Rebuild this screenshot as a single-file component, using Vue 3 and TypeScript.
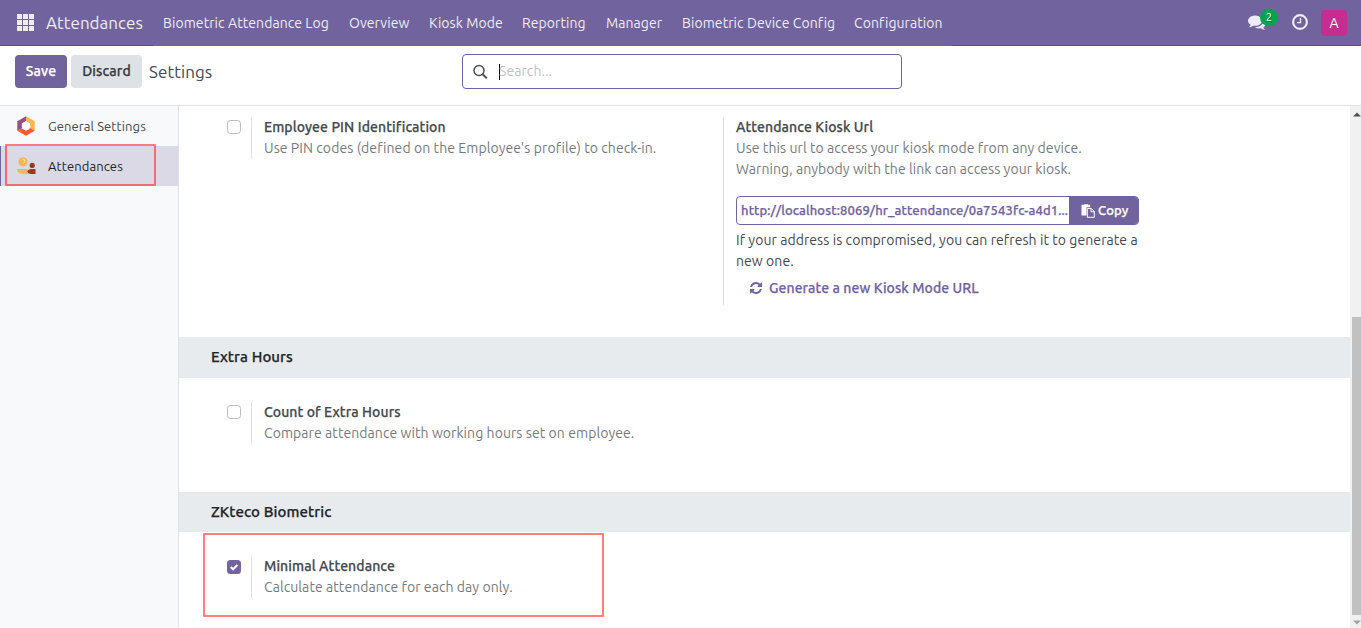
<script setup lang="ts">
import { ref } from 'vue'

interface MenuItem { key: string; label: string }

const menu: MenuItem[] = [
  { key: 'log', label: 'Biometric Attendance Log' },
  { key: 'overview', label: 'Overview' },
  { key: 'kiosk', label: 'Kiosk Mode' },
  { key: 'reporting', label: 'Reporting' },
  { key: 'manager', label: 'Manager' },
  { key: 'device', label: 'Biometric Device Config' },
  { key: 'config', label: 'Configuration' },
]

const minimal = ref(true)
const extra = ref(false)
const pin = ref(false)
const kioskUrl = 'http://localhost:8069/hr_attendance/0a7543fc-a4d1...'
</script>

<template>
  <div class="page">
    <header class="navbar">
      <div class="brand">
        <svg class="apps" viewBox="0 0 17 17" width="17" height="17" fill="#efedf4">
          <path d="M0 0h5v5H0zM6 0h5v5H6zM12 0h5v5h-5zM0 6h5v5H0zM6 6h5v5H6zM12 6h5v5h-5zM0 12h5v5H0zM6 12h5v5H6zM12 12h5v5h-5z" />
        </svg>
        <span class="app-name">Attendances</span>
      </div>
      <nav class="menu">
        <a v-for="m in menu" :key="m.key" :class="['menu-item', m.key]">{{ m.label }}</a>
      </nav>
      <div class="systray">
        <div class="messages">
          <svg viewBox="0 0 1792 1792" width="18" height="18" fill="#efedf4">
            <path d="M1408 768q0 139-94 257t-256.500 186.500-353.500 68.500q-86 0-176-16-124 88-278 128-36 9-86 16h-3q-11 0-20.500-8t-11.500-21q-1-3-1-6.500t.5-6.500 2-6l2.500-5 3.500-5.500 4-5 4.500-5 4-4.500q5-6 23-25t26-29.500 22.500-29 25-38.500 20.500-44q-124-72-195-177t-71-224q0-139 94-257t256.500-186.500 353.500-68.500 353.500 68.500 256.500 186.500 94 257zm384 256q0 120-71 224.500t-195 176.500q10 24 20.500 44t25 38.500 22.500 29 26 29.500 23 25q1 1 4 4.500t4.500 5 4 5 3.500 5.500l2.500 5 2 6 .5 6.500-1 6.500q-3 14-13 22t-22 7q-50-7-86-16-154-40-278-128-90 16-176 16-271 0-472-132 58 4 88 4 161 0 309-45t264-129q125-92 192-212t67-254q0-77-23-152 129 71 204 178t75 230z" />
          </svg>
          <span class="badge">2</span>
        </div>
        <svg class="clock" viewBox="0 0 16 16" width="16" height="16" fill="none" stroke="#efedf4">
          <circle cx="8" cy="8" r="6.900" stroke-width="2.100" />
          <path d="M8.500 4v4.700H5" stroke-width="1.300" />
        </svg>
        <span class="avatar">A</span>
      </div>
    </header>

    <section class="control">
      <button class="btn save">Save</button>
      <button class="btn discard">Discard</button>
      <span class="title">Settings</span>
      <div class="search">
        <svg viewBox="0 0 16 16" width="16" height="16" fill="none" stroke="#495057">
          <circle cx="6" cy="6.500" r="5" stroke-width="1.500" />
          <path d="M9.600 10.200l4.100 4" stroke-width="1.900" />
        </svg>
        <span class="caret"></span>
        <span class="placeholder">Search...</span>
      </div>
    </section>

    <div class="body">
      <aside class="sidebar">
        <div class="tab">
          <svg viewBox="0 0 20 20" width="20" height="20">
            <path d="M10 .3L1.300 5.200v9.600L6 12.300 5.800 7.600 10 5z" fill="#985184" />
            <path d="M10 .3l8.700 4.900v9.600L14.200 12V7.700L10 5z" fill="#fbb54f" />
            <path d="M1.300 14.800L10 19.700l8.700-4.900-4.500-2.700L10 14.800l-4.100-2.600z" fill="#fc5a2d" />
            <circle cx="10" cy="10" r="4.200" fill="#fff" />
          </svg>
          <span class="general">General Settings</span>
        </div>
        <div class="tab active">
          <svg viewBox="0 0 20 20" width="20" height="20">
            <circle cx="7" cy="5.700" r="4.500" fill="#fbb54f" />
            <path d="M6.300 2.800q2.800.2 2.600 3L7.300 7" fill="none" stroke="#fde3bd" stroke-width="1" />
            <circle cx="16.200" cy="9.400" r="2.600" fill="#953b24" />
            <path d="M.7 13h10.500l3.500 5H6.500Q1.600 17.800.7 13z" fill="#fbb54f" />
            <path d="M11.200 15.500q1-2.500 3.500-2.500h4.800v5h-4.800q-2.500-.4-3.500-2.500z" fill="#953b24" />
          </svg>
          <span class="att">Attendances</span>
          <i class="mark"></i>
        </div>
      </aside>

      <main class="content">
        <div class="row first">
          <div class="setting left">
            <span :class="['check', { on: pin }]"></span>
            <div class="pane">
              <div class="name">Employee PIN Identification</div>
              <div class="help">Use PIN codes (defined on the Employee's profile) to check-in.</div>
            </div>
          </div>
          <div class="pane kiosk-pane">
            <div class="name">Attendance Kiosk Url</div>
            <div class="help">Use this url to access your kiosk mode from any device.</div>
            <div class="help">Warning, anybody with the link can access your kiosk.</div>
            <div class="copy-field">
              <span class="url">{{ kioskUrl }}</span>
              <button class="copy">
                <svg viewBox="0 0 14 14" width="14" height="14">
                  <path d="M.5.8h2.600V.3h3.800v.5h2.300v2.500H5.500v8.200h-5z" fill="#fff" />
                  <path d="M6.300 4.500h4l3 3v5.800h-7z" fill="none" stroke="#fff" />
                  <path d="M10 4.500v3.300h3.300" fill="none" stroke="#fff" />
                </svg>
                <span>Copy</span>
              </button>
            </div>
            <div class="note">If your address is compromised, you can refresh it to generate a</div>
            <div class="note">new one.</div>
            <a class="generate">
              <svg viewBox="0 0 1536 1536" width="12" height="12" fill="#71639e">
                <path d="M1511 928q0 5-1 7-64 268-268 434.500T764 1536q-146 0-282.500-55T238 1324l-129 129q-19 19-45 19t-45-19-19-45V960q0-26 19-45t45-19h448q26 0 45 19t19 45-19 45l-137 137q71 66 161 102t187 36q134 0 250-65t186-179q11-17 53-117 8-23 30-23h192q13 0 22.500 9.500t9.500 22.500zm25-800v448q0 26-19 45t-45 19h-448q-26 0-45-19t-19-45 19-45l138-138Q969 256 768 256q-134 0-250 65T332 500q-11 17-53 117-8 23-30 23H50q-13 0-22.500-9.500T18 608v-7q65-268 270-434.500T768 0q146 0 284 55.500T1297 212l130-129q19-19 45-19t45 19 19 45z" />
              </svg>
              <span>Generate a new Kiosk Mode URL</span>
            </a>
          </div>
        </div>

        <h2 class="band b1"><span>Extra Hours</span></h2>
        <div class="row second">
          <div class="setting">
            <span :class="['check', { on: extra }]"></span>
            <div class="pane">
              <div class="name">Count of Extra Hours</div>
              <div class="help">Compare attendance with working hours set on employee.</div>
            </div>
          </div>
        </div>

        <h2 class="band b2"><span>ZKteco Biometric</span></h2>
        <div class="row third">
          <div class="setting">
            <span :class="['check', { on: minimal }]">
              <svg v-if="minimal" viewBox="0 0 14 14" width="14" height="14" fill="none" stroke="#fff" stroke-width="2">
                <path d="M3.800 7l2.300 2.300 4.300-4.300" />
              </svg>
            </span>
            <div class="pane">
              <div class="name">Minimal Attendance</div>
              <div class="help">Calculate attendance for each day only.</div>
            </div>
          </div>
          <i class="mark"></i>
        </div>
      </main>

      <div class="scrollbar">
        <svg class="up" viewBox="0 0 8 5" width="8" height="5"><path d="M0 4.500L4 .5l4 4z" fill="#505050" /></svg>
        <div class="thumb"></div>
        <svg class="down" viewBox="0 0 8 5" width="8" height="5"><path d="M0 .5l4 4 4-4z" fill="#a3a3a3" /></svg>
      </div>
    </div>
  </div>
</template>

<style>
body { margin: 0; overflow: hidden; }
</style>

<style scoped>
* { box-sizing: border-box; }
.page { width: 1361px; height: 628px; display: flex; flex-direction: column; background: #fff; font: 14px/21px Ubuntu, "Noto Sans", sans-serif; letter-spacing: .075px; color: #434a51; white-space: nowrap; overflow: hidden; }
.navbar { height: 46px; flex: none; display: flex; background: #71639e; color: #efedf4; }
.brand { width: 153px; padding: 0 0 0 17px; display: flex; align-items: center; border-bottom: 1px solid #5a4f7f; }
.app-name { margin-left: 12px; font-size: 17px; letter-spacing: .03px; }
.menu { display: flex; line-height: 46px; }
.menu-item { padding-left: 10px; }
.log { width: 186px; }
.overview { width: 80px; }
.kiosk { width: 93px; }
.reporting { width: 84px; }
.manager { width: 76px; }
.device { width: 172px; }
.config { width: 108px; }
.systray { flex: 1; display: flex; align-items: center; justify-content: flex-end; padding-right: 14px; border-bottom: 1px solid #5a4f7f; }
.messages { position: relative; width: 44px; height: 18px; }
.messages svg { display: block; margin-top: -1px; }
.badge { position: absolute; left: 12px; top: -5px; width: 18px; height: 17px; border-radius: 9px; background: #00a550; color: #fff; font-size: 11px; line-height: 17px; text-align: center; text-shadow: 1px 1px 0 rgba(0,0,0,.3); }
.clock { margin: -2px 13px 0 0; }
.avatar { width: 26px; height: 26px; border-radius: 4px; background: #c52d8e; color: #fff; line-height: 27px; text-align: center; }

.control { height: 60px; flex: none; border-bottom: 1px solid #dee2e6; display: flex; align-items: flex-start; padding: 8px 0 0 15px; }
.btn { height: 33px; margin: 1px 4px 0 0; padding: 0; border: 0; border-radius: 4px; font: 500 14px/33px Ubuntu, "Noto Sans", sans-serif; text-align: center; letter-spacing: .15px; }
.btn, .name, .copy-field, .generate, .band { -webkit-text-stroke: .25px currentColor; }
.save { width: 52px; background: #71639e; color: #fff; }
.discard { width: 71px; background: #dee2e6; color: #343a40; }
.title { margin-left: 3px; width: 313px; font-size: 17px; line-height: 36px; }
.search { width: 440px; height: 35px; border: 1px solid #71639e; border-radius: 4px; display: flex; align-items: center; padding-left: 10px; }
.caret { width: 1px; height: 16px; margin-left: 10px; background: #000; }
.placeholder { margin-left: -1px; color: #bcc3ca; line-height: 33px; }

.body { flex: 1; display: flex; min-height: 0; }
.sidebar { width: 179px; flex: none; background: #f8f9fa; border-right: 1px solid #dee2e6; font-size: 13px; letter-spacing: .1px; }
.tab { position: relative; height: 40px; display: flex; align-items: center; padding-left: 16px; }
.tab span { margin-left: 12px; }
.active { background: #dcd9e6; color: #212529; border-left: 1px solid #71639e; padding-left: 15px; }
.mark { position: absolute; border: 2px solid rgba(255, 0, 0, .5); border-radius: 1px; }
.active .mark { left: 4px; top: -2px; width: 151px; height: 42px; }
.content { flex: 1; }
.row { position: relative; display: flex; padding-left: 48px; }
.first { height: 231px; padding-top: 11px; }
.second { height: 114px; padding-top: 24px; }
.third { height: 96px; padding-top: 24px; }
.third .mark { left: 24px; top: 1px; width: 401px; height: 84px; }
.setting { display: flex; align-items: flex-start; }
.left { width: 496px; }
.check { width: 14px; height: 14px; margin: 3px 10px 0 0; border: 1px solid #b9bcc0; border-radius: 3.500px; flex: none; display: flex; }
.check.on { margin-top: 4px; background: #71639e; border: 0; }
.pane { border-left: 1px solid #dee2e6; padding-left: 12px; height: 42px; }
.kiosk-pane { width: 430px; height: 188px; }
.name { font-weight: 500; letter-spacing: .1px; }
.help { color: #757b81; }
.copy-field { margin: 16px 0 5px; width: 403px; height: 29px; border: 1px solid #71639e; border-radius: 4px; display: flex; overflow: hidden; color: #71639e; font-size: 13px; font-weight: 500; line-height: 27px; letter-spacing: .13px; }
.url { width: 332px; padding-left: 4px; flex: none; }
.copy { flex: 1; padding: 0 0 0 12px; border: 0; background: #71639e; color: #fff; font: inherit; letter-spacing: inherit; display: flex; align-items: center; }
.copy span { margin-left: 3px; }
.generate { display: flex; align-items: center; margin-top: 6px; padding-left: 14px; color: #71639e; font-weight: 500; }
.generate svg { margin-top: -1px; }
.generate span { margin-left: 7px; }
.band { margin: 0; height: 41px; background: #e7ebee; padding-left: 32px; font-size: 15px; font-weight: 500; line-height: 40px; color: #212529; letter-spacing: .1px; }
.b2 { height: 40px; margin: 0; }
.scrollbar { width: 11px; background: #f1f1f1; display: flex; flex-direction: column; align-items: flex-end; }
.up { margin: 6px 0 200px; flex: none; }
.thumb { width: 9px; height: 298px; background: #c1c1c1; }
.down { margin-top: 5px; flex: none; }
</style>
